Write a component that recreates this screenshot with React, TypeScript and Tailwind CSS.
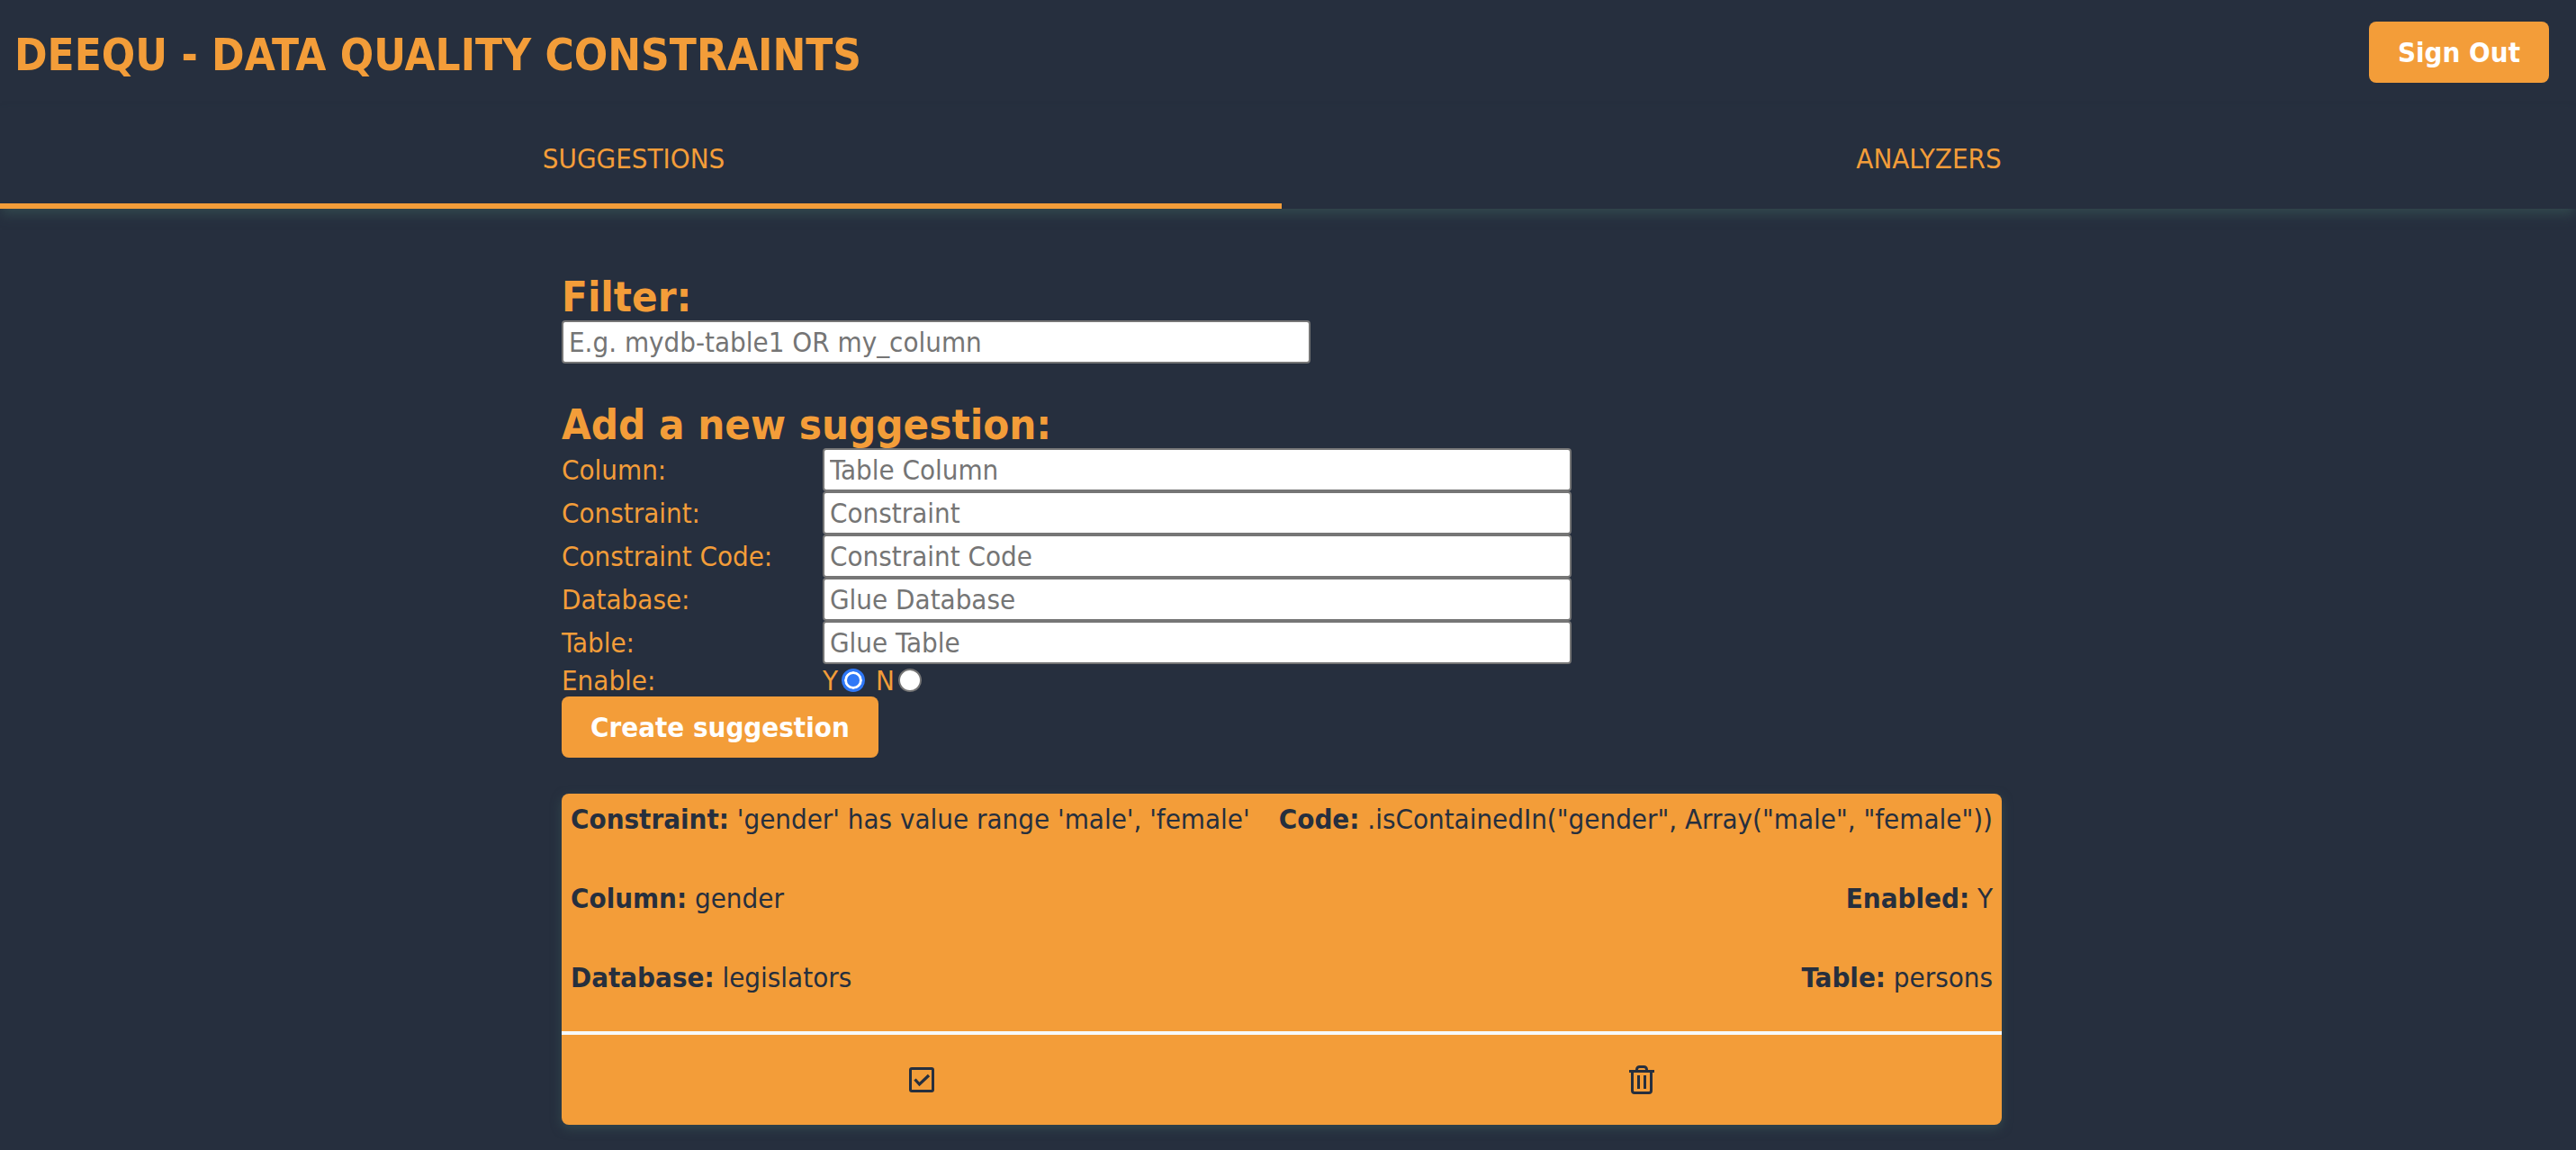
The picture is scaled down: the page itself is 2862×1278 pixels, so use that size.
import { useState } from "react";
import type { ReactNode } from "react";

const fields = [
  { id: "column", label: "Column:", placeholder: "Table Column" },
  { id: "constraint", label: "Constraint:", placeholder: "Constraint" },
  { id: "code", label: "Constraint Code:", placeholder: "Constraint Code" },
  { id: "database", label: "Database:", placeholder: "Glue Database" },
  { id: "table", label: "Table:", placeholder: "Glue Table" },
];

const inputClass =
  "block h-12 w-full max-w-[832px] rounded-[4px] border-2 border-[#767676] bg-white px-1.5 text-[#262f3e] placeholder:text-[#757575]";

const buttonClass = "h-[68px] rounded-lg bg-[#f39d39] px-8 font-bold text-white";

function Radio({ label, value, checked, onChange }: { label: string; value: string; checked: boolean; onChange: () => void }) {
  return (
    <label className="flex items-center gap-1">
      {label}
      <input
        type="radio"
        name="enable"
        value={value}
        checked={checked}
        onChange={onChange}
        className="size-[26px] appearance-none rounded-full border-2 border-[#767676] bg-white checked:border-[3px] checked:border-[#2f78f7] checked:bg-[#2f78f7] checked:shadow-[inset_0_0_0_3px_white]"
      />
    </label>
  );
}

function Detail({ name, children }: { name: string; children: ReactNode }) {
  return (
    <p className="whitespace-nowrap">
      <strong className="font-bold">{name}:</strong> {children}
    </p>
  );
}

function CheckIcon() {
  return (
    <svg viewBox="0 0 32 32" className="size-8" fill="none" stroke="currentColor" strokeWidth="3" aria-hidden="true">
      <rect x="3.5" y="3.5" width="25" height="25" rx="1.5" />
      <path d="M8.5 15.5l5 5.5L24 11" strokeWidth="3.2" />
    </svg>
  );
}

function TrashIcon() {
  return (
    <svg viewBox="0 0 32 32" className="size-8" fill="none" stroke="currentColor" strokeWidth="3" aria-hidden="true">
      <path d="M2 6.500h28" />
      <path d="M10.500 6V4.500a3 3 0 0 1 3-3h5a3 3 0 0 1 3 3V6" />
      <path d="M5.500 7v21a2.500 2.500 0 0 0 2.500 2.500h16a2.500 2.500 0 0 0 2.500-2.500V7" />
      <path d="M12.500 11v15M19.500 11v15" />
    </svg>
  );
}

export default function App() {
  const [enabled, setEnabled] = useState("Y");

  return (
    <div className="min-h-screen bg-[#262f3e] font-['DejaVu_Sans_Condensed','DejaVu_Sans',sans-serif] text-[31px] leading-9 text-[#f39d39]">
      <header className="flex items-start justify-between pt-6 pr-[30px] pl-4">
        <h1 className="pt-1.5 text-[49px] leading-[64px] font-bold">DEEQU - DATA QUALITY CONSTRAINTS</h1>
        <button type="button" className={buttonClass}>
          Sign Out
        </button>
      </header>

      <nav className="mt-[26px] grid grid-cols-[calc(50%-7px)_1fr] shadow-[0_8px_12px_-2px_#32484e]">
        <a href="#suggestions" className="h-28 border-b-[6px] border-[#f39d39] pt-[38px] pr-4 text-center">
          SUGGESTIONS
        </a>
        <a href="#analyzers" className="h-28 pt-[38px] text-center">
          ANALYZERS
        </a>
      </nav>

      <main className="mx-auto w-full max-w-[1600px] pt-[74px] pb-7 [margin-left:max(0px,calc(50%-807px))]">
        <label htmlFor="filter" className="block pb-0.5 text-[47px] leading-[48px] font-bold">
          Filter:
        </label>
        <input id="filter" type="text" placeholder="E.g. mydb-table1 OR my_column" className={inputClass} />

        <form className="mt-11" onSubmit={(e) => e.preventDefault()}>
          <h2 className="pb-0.5 text-[47px] leading-[48px] font-bold">Add a new suggestion:</h2>
          <div className="grid grid-cols-[290px_1fr] items-center">
            {fields.map((f) => (
              <div key={f.id} className="col-span-2 grid grid-cols-subgrid items-center">
                <label htmlFor={f.id}>{f.label}</label>
                <input id={f.id} type="text" placeholder={f.placeholder} className={inputClass} />
              </div>
            ))}
            <span id="enable-label">Enable:</span>
            <div role="radiogroup" aria-labelledby="enable-label" className="flex gap-3">
              <Radio label="Y" value="Y" checked={enabled === "Y"} onChange={() => setEnabled("Y")} />
              <Radio label="N" value="N" checked={enabled === "N"} onChange={() => setEnabled("N")} />
            </div>
          </div>
          <button type="submit" className={`block ${buttonClass}`}>
            Create suggestion
          </button>
        </form>

        <article className="mt-10 rounded-lg bg-[#f39d39] text-[#262f3e] shadow-[0_4px_12px_#32484e]">
          <div className="flex flex-col gap-[52px] px-2.5 pt-2.5 pb-[42px]">
            <div className="flex justify-between">
              <Detail name="Constraint">'gender' has value range 'male', 'female'</Detail>
              <Detail name="Code">.isContainedIn("gender", Array("male", "female"))</Detail>
            </div>
            <div className="flex justify-between">
              <Detail name="Column">gender</Detail>
              <Detail name="Enabled">Y</Detail>
            </div>
            <div className="flex justify-between">
              <Detail name="Database">legislators</Detail>
              <Detail name="Table">persons</Detail>
            </div>
          </div>
          <div className="grid grid-cols-2 border-t-4 border-[#f7fafc]">
            <button type="button" aria-label="Toggle suggestion" className="flex h-[100px] items-center justify-center">
              <CheckIcon />
            </button>
            <button type="button" aria-label="Delete suggestion" className="flex h-[100px] items-center justify-center">
              <TrashIcon />
            </button>
          </div>
        </article>
      </main>
    </div>
  );
}
